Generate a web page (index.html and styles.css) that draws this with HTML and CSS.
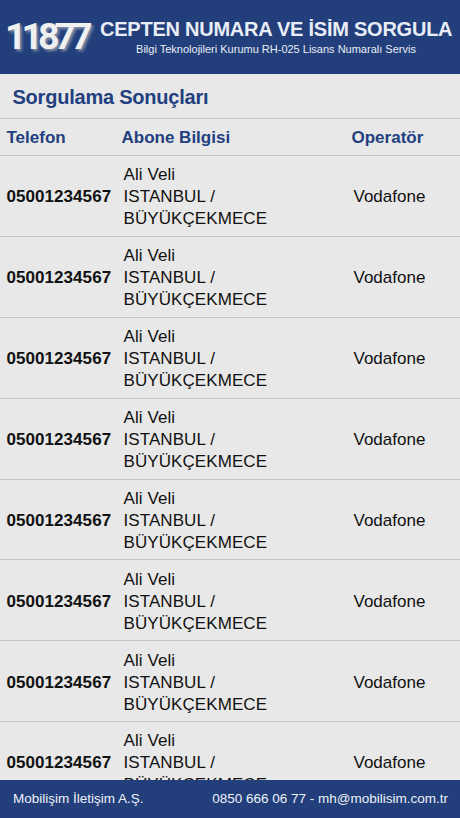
FILE: index.html
```html
<!DOCTYPE html>
<html lang="tr">
<head>
  <meta charset="UTF-8" />
  <meta name="viewport" content="width=device-width, initial-scale=1" />
  <title>11877 - Sorgulama Sonuçları</title>
  <link rel="stylesheet" href="styles.css">
</head>
<body>
  <header class="header">
    <div class="logo">11877</div>
    <div class="header-text">
      <h1>CEPTEN NUMARA VE İSİM SORGULA</h1>
      <p>Bilgi Teknolojileri Kurumu RH-025 Lisans Numaralı Servis</p>
    </div>
  </header>

  <main class="content">
    <h2 class="page-title">Sorgulama Sonuçları</h2>
    <div class="row row-head">
      <div>Telefon</div>
      <div>Abone Bilgisi</div>
      <div>Operatör</div>
    </div>
    <div class="row">
      <div class="phone">05001234567</div>
      <div class="info">Ali Veli<br>ISTANBUL /<br>BÜYÜKÇEKMECE</div>
      <div class="operator">Vodafone</div>
    </div>
    <div class="row">
      <div class="phone">05001234567</div>
      <div class="info">Ali Veli<br>ISTANBUL /<br>BÜYÜKÇEKMECE</div>
      <div class="operator">Vodafone</div>
    </div>
    <div class="row">
      <div class="phone">05001234567</div>
      <div class="info">Ali Veli<br>ISTANBUL /<br>BÜYÜKÇEKMECE</div>
      <div class="operator">Vodafone</div>
    </div>
    <div class="row">
      <div class="phone">05001234567</div>
      <div class="info">Ali Veli<br>ISTANBUL /<br>BÜYÜKÇEKMECE</div>
      <div class="operator">Vodafone</div>
    </div>
    <div class="row">
      <div class="phone">05001234567</div>
      <div class="info">Ali Veli<br>ISTANBUL /<br>BÜYÜKÇEKMECE</div>
      <div class="operator">Vodafone</div>
    </div>
    <div class="row">
      <div class="phone">05001234567</div>
      <div class="info">Ali Veli<br>ISTANBUL /<br>BÜYÜKÇEKMECE</div>
      <div class="operator">Vodafone</div>
    </div>
    <div class="row">
      <div class="phone">05001234567</div>
      <div class="info">Ali Veli<br>ISTANBUL /<br>BÜYÜKÇEKMECE</div>
      <div class="operator">Vodafone</div>
    </div>
    <div class="row">
      <div class="phone">05001234567</div>
      <div class="info">Ali Veli<br>ISTANBUL /<br>BÜYÜKÇEKMECE</div>
      <div class="operator">Vodafone</div>
    </div>
  </main>

  <footer class="footer">
    <span>Mobilişim İletişim A.Ş.</span>
    <span class="contact">0850 666 06 77 - mh@mobilisim.com.tr</span>
  </footer>
</body>
</html>
```

FILE: styles.css
```css
* {
  box-sizing: border-box;
}
body {
  margin: 0;
  height: 100vh;
  display: flex;
  flex-direction: column;
  overflow: hidden;
  font-family: "Liberation Sans", Arial, sans-serif;
  font-size: 17px;
  color: #111;
  background-color: #e8e8e8;
}
.header {
  flex: none;
  display: flex;
  height: 74px;
  padding-left: 5px;
  color: #e9edf6;
  background-color: #223f7b;
}
.logo {
  width: 95px;
  padding-top: 16px;
  font-family: Roboto, Arial, sans-serif;
  font-size: 37.5px;
  line-height: 41px;
  font-weight: bold;
  letter-spacing: -5px;
  color: #f0f0f0;
  text-shadow: 2px 2px 3px #8c94a8;
}
.header-text {
  width: 352px;
  padding-top: 18px;
  text-align: center;
  white-space: nowrap;
}
.header-text h1 {
  margin: 0;
  font-size: 20px;
  line-height: 23px;
  letter-spacing: -0.24px;
}
.header-text p {
  margin: 2px 0 0;
  font-size: 11px;
  line-height: 13px;
}
.content {
  flex: 1;
  min-height: 0;
  overflow: hidden;
}
.page-title {
  margin: 0;
  height: 45px;
  padding-left: 12.5px;
  font-size: 20px;
  line-height: 46px;
  letter-spacing: -0.22px;
  color: #223f7f;
  border-bottom: 1px solid #c6c8c8;
}
.row {
  display: grid;
  grid-template-columns: 117px 230px 1fr;
  align-items: center;
  height: 80.9px;
  padding-top: 2.5px;
  padding-left: 6.5px;
  line-height: 22px;
  border-bottom: 1px solid #c6c8c8;
}
.row-head {
  height: 37px;
  grid-template-columns: 115px 230px 1fr;
  font-weight: bold;
  color: #223f7f;
}
.phone {
  font-weight: bold;
  letter-spacing: 0.06px;
}
.info {
  letter-spacing: 0.08px;
}
.footer {
  flex: none;
  display: flex;
  justify-content: space-between;
  height: 38px;
  padding: 0 12px 0 13px;
  font-size: 13.5px;
  line-height: 38px;
  color: #eef1f8;
  background-color: #223f7b;
}
```
